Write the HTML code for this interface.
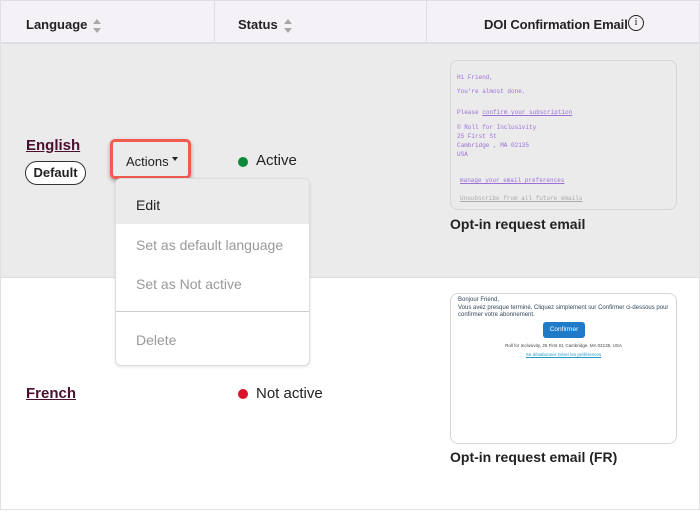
<!DOCTYPE html>
<html><head><style>
*{margin:0;padding:0;box-sizing:border-box}
body{width:700px;height:519px;background:#fff;font-family:"Liberation Sans",sans-serif;color:#33475b;position:relative;overflow:hidden}
.abs{position:absolute;white-space:nowrap}
.hdr{left:0;top:0;width:700px;height:44px;background:#f5f2f7;border:1px solid #e3dfe6;border-bottom:2px solid #e0dce3}
.hd{top:17px;font-size:13px;font-weight:bold;color:#222}
.sort{display:inline-block;vertical-align:middle;margin-left:6px;width:8px;height:14px;position:relative}
.sort:before{content:"";position:absolute;top:0;left:0;border:4px solid transparent;border-bottom:5px solid #a8a8a8;border-top:0}
.sort:after{content:"";position:absolute;bottom:0;left:0;border:4px solid transparent;border-top:5px solid #a8a8a8;border-bottom:0}
.m{position:absolute;left:457px;font-family:"Liberation Mono",monospace;font-size:6px;line-height:6px;color:#9b6fd8;white-space:nowrap}
</style></head><body>
<div class="abs hdr"></div>
<div class="abs" style="left:214px;top:1px;width:1px;height:42px;background:#e0dce3"></div>
<div class="abs" style="left:426px;top:1px;width:1px;height:42px;background:#e0dce3"></div>
<div class="abs hd" style="left:26px">Language<span class="sort"></span></div>
<div class="abs hd" style="left:238px">Status<span class="sort"></span></div>
<div class="abs hd" style="left:484px;letter-spacing:-0.1px">DOI Confirmation Email</div>
<div class="abs" style="left:628px;top:15px;width:16px;height:16px;border:1.5px solid #222;border-radius:50%;font-size:11px;text-align:center;line-height:13px;color:#222;font-family:'Liberation Serif',serif">i</div>

<div class="abs" style="left:0;top:44px;width:700px;height:233px;background:#ebebeb;border-left:1px solid #e0e0e0;border-right:1px solid #e0e0e0"></div>
<div class="abs" style="left:0;top:277px;width:700px;height:233px;border:1px solid #e0e0e0;border-top:1px solid #ddd"></div>

<div class="abs" style="left:26px;top:137px;font-size:15px;font-weight:bold;color:#4a1030;text-decoration:underline">English</div>
<div class="abs" style="left:25px;top:161px;width:61px;height:24px;border:1px solid #333;border-radius:12px;background:#fff;font-size:13px;font-weight:bold;color:#222;text-align:center;line-height:22px">Default</div>

<div class="abs" style="left:110px;top:139px;width:81px;height:40px;border:3px solid #f05b50;border-radius:5px;box-shadow:0 2px 4px rgba(0,0,0,.35)"></div>
<div class="abs" style="left:126px;top:154px;font-size:13px;color:#222">Actions <span style="display:inline-block;border:3.5px solid transparent;border-top:4px solid #222;vertical-align:2px"></span></div>

<div class="abs" style="left:238px;top:157px;width:10px;height:10px;border-radius:50%;background:#0a8a3a"></div>
<div class="abs" style="left:256px;top:152px;font-size:15px;color:#222">Active</div>

<div class="abs" style="left:115px;top:178px;width:195px;height:188px;background:#fff;border:1px solid #ddd;border-radius:6px;box-shadow:0 1px 3px rgba(0,0,0,.1);overflow:hidden;font-size:14px;color:#999">
<div style="height:45px;background:#ebebeb;color:#222;padding:18px 0 0 20px;line-height:16px">Edit</div>
<div style="position:absolute;left:20px;top:58px">Set as default language</div>
<div style="position:absolute;left:20px;top:97px">Set as Not active</div>
<div style="position:absolute;left:0;top:132px;width:100%;height:1px;background:#ccc"></div>
<div style="position:absolute;left:20px;top:153px">Delete</div>
</div>

<div class="abs" style="left:450px;top:60px;width:227px;height:150px;border:1px solid #d6d6d6;border-radius:8px;background:#ebebeb"></div>
<div class="m" style="top:75px">Hi Friend,</div>
<div class="m" style="top:89px">You're almost done.</div>
<div class="m" style="top:110px">Please <u>confirm your subscription</u></div>
<div class="m" style="top:125px">© Roll for Inclusivity</div>
<div class="m" style="top:134px">25 First St</div>
<div class="m" style="top:143px">Cambridge , MA 02135</div>
<div class="m" style="top:152px">USA</div>
<div class="m" style="top:178px;left:460px"><u>manage your email preferences</u></div>
<div class="m" style="top:196px;left:460px;color:#aaa"><u>Unsubscribe from all future emails</u></div>
<div class="abs" style="left:450px;top:216px;font-size:14px;font-weight:bold;color:#222">Opt-in request email</div>

<div class="abs" style="left:26px;top:385px;font-size:15px;font-weight:bold;color:#4a1030;text-decoration:underline">French</div>
<div class="abs" style="left:238px;top:389px;width:10px;height:10px;border-radius:50%;background:#d9132a"></div>
<div class="abs" style="left:256px;top:385px;font-size:15px;color:#222">Not active</div>

<div class="abs" style="left:450px;top:293px;width:227px;height:151px;border:1px solid #d6d6d6;border-radius:8px;background:#fff"></div>
<div class="abs" style="left:458px;top:297px;width:215px;white-space:normal;font-size:6px;line-height:7.5px;color:#33475b">Bonjour Friend,<br>Vous avez presque terminé. Cliquez simplement sur Confirmer ci-dessous pour confirmer votre abonnement.</div>
<div class="abs" style="left:543px;top:322px;width:42px;height:16px;background:#1f7ac8;border-radius:3px;color:#fff;font-size:6.5px;text-align:center;line-height:16px">Confirmer</div>
<div class="abs" style="left:450px;top:343px;width:227px;text-align:center;font-size:4.5px;color:#444">Roll for Inclusivity, 25 First St, Cambridge, MA 02135, USA</div>
<div class="abs" style="left:450px;top:352px;width:227px;text-align:center;font-size:4.5px;color:#1f9ac8;text-decoration:underline">Se désabonner Gérer les préférences</div>
<div class="abs" style="left:450px;top:449px;font-size:14px;font-weight:bold;color:#222">Opt-in request email (FR)</div>
</body></html>
